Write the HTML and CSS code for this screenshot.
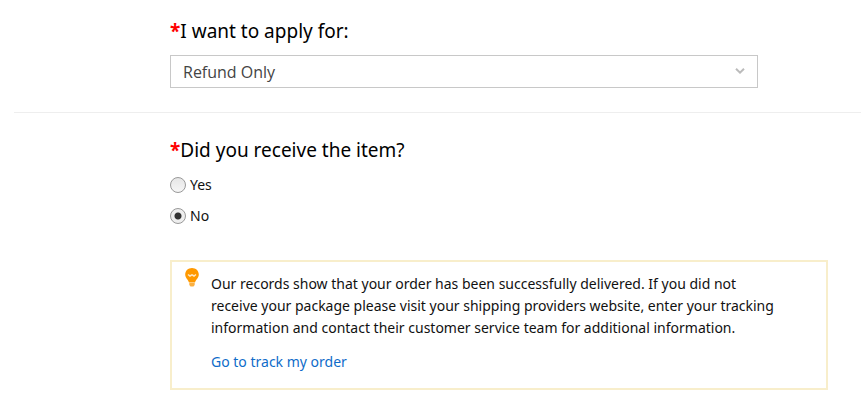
FILE: index.html
```html
<!DOCTYPE html>
<html lang="en">
<head>
<meta charset="utf-8">
<title>Refund request</title>
<link rel="stylesheet" href="styles.css">
</head>
<body>
<form class="form">
  <section class="section">
    <label class="title" for="type"><span class="required">*</span>I want to apply for:</label>
    <div class="select-wrap">
      <select class="select" id="type"><option>Refund Only</option></select>
      <svg class="chevron" viewBox="0 0 10 6" aria-hidden="true"><path d="M1 .8 5 4.600 9 .8"/></svg>
    </div>
  </section>
  <fieldset class="section">
    <legend class="title"><span class="required">*</span>Did you receive the item?</legend>
    <label class="choice"><input class="radio" type="radio" name="received">Yes</label>
    <label class="choice"><input class="radio" type="radio" name="received" checked>No</label>
    <div class="notice">
      <svg class="bulb" viewBox="0 0 14 20" aria-hidden="true">
        <path class="bulb-glass" d="M7 0C3.200 0 .2 2.800.2 6.500c0 3.700 3 4.900 3.800 8h6c.8-3.100 3.800-4.300 3.800-8C13.800 2.800 10.800 0 7 0Z"/>
        <path class="bulb-wire" d="m3 6.500 2 1.500 2-1.200L9 8l2-1.500"/>
        <path class="bulb-base" d="M4.300 15h5.400v2L8.500 18.500h-3L4.300 17Z"/>
      </svg>
      <div class="notice-body">
        <p class="text">Our records show that your order has been successfully delivered. If you did not receive your package please visit your shipping providers website, enter your tracking information and contact their customer service team for additional information.</p>
        <a class="link" href="#track">Go to track my order</a>
      </div>
    </div>
  </fieldset>
</form>
</body>
</html>
```
FILE: styles.css
```css
* { box-sizing: border-box; }
body {
  margin: 0;
  background: #fff;
  color: #111;
  font: 14px/22px "Noto Sans", "Open Sans", sans-serif;
}
.form { padding-left: 14px; }
.section {
  min-width: 0;
  margin: 0;
  border: 0;
  padding: 16px 33px 18px 156px;
}
.section:first-child { padding-bottom: 24px; }
.section + .section { border-top: 1px solid #eee; padding-top: 22px; }
.title { display: block; padding: 0; color: #000; font-size: 19px; line-height: 30px; }
legend.title { float: left; width: 100%; margin-bottom: 4px; }
legend.title + .choice { clear: both; }
.required { color: #f00; font-weight: 700; }
.select-wrap { position: relative; max-width: 588px; margin-top: 9px; }
.select {
  display: block;
  width: 100%;
  height: 33px;
  border: 1px solid #c8c8c8;
  border-radius: 0;
  padding: 0 32px 0 12px;
  appearance: none;
  background: #fff;
  color: #444;
  font: 16px/24px "Open Sans", "Noto Sans", sans-serif;
}
.chevron {
  position: absolute;
  top: 13px;
  right: 13px;
  width: 10px;
  height: 6px;
  fill: none;
  stroke: #bbb;
  stroke-width: 2;
  pointer-events: none;
}
.choice { display: flex; align-items: center; gap: 4px; height: 31px; }
.radio {
  width: 16px;
  height: 16px;
  margin: 0;
  border: 1px solid #999;
  border-radius: 50%;
  appearance: none;
  background: linear-gradient(#e6e6e6, #f6f6f6);
}
.radio:checked { background: radial-gradient(circle, #333 0 3px, #eee 4px); }
.notice {
  display: flex;
  align-items: flex-start;
  gap: 12px;
  margin-top: 29px;
  border: 2px solid #f8eecb;
  padding: 6px 40px 15px 13px;
}
.bulb { flex: none; width: 14px; height: 20px; }
.bulb-glass { fill: #f90; }
.bulb-wire { fill: none; stroke: #ffe8c4; stroke-width: 1.5; }
.bulb-base { fill: #fbb040; }
.notice-body { padding-top: 5px; }
.text { margin: 0 0 12px; }
.link { color: #0f6cc9; text-decoration: none; }
```
